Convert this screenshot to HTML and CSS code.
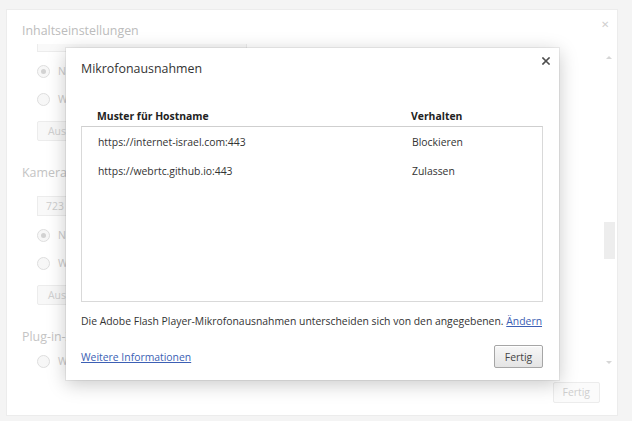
FILE: index.html
```html
<!DOCTYPE html>
<html lang="de">
<head>
<meta charset="utf-8">
<title>Mikrofonausnahmen</title>
<link rel="stylesheet" href="styles.css">
</head>
<body>
<div class="settings">
  <div class="settings-head">
    <span class="settings-title">Inhaltseinstellungen</span>
    <span class="settings-close">&#x2715;</span>
  </div>
  <div class="settings-body">
    <div class="scroll">
      <div class="sel sel-top"></div>
      <div class="radio-row"><span class="radio checked"></span><span>Nachfragen, wenn eine Website auf das Mikrofon zugreifen möchte</span></div>
      <div class="radio-row"><span class="radio"></span><span>Websites den Zugriff auf das Mikrofon nicht gestatten</span></div>
      <div class="bgbtn">Ausnahmen verwalten...</div>
      <div class="sect">Kamera</div>
      <div class="sel">723 HD Webcam</div>
      <div class="radio-row"><span class="radio checked"></span><span>Nachfragen, wenn eine Website auf die Kamera zugreifen möchte</span></div>
      <div class="radio-row"><span class="radio"></span><span>Websites den Zugriff auf die Kamera nicht gestatten</span></div>
      <div class="bgbtn">Ausnahmen verwalten...</div>
      <div class="sect sect-plug">Plug-in-Zugriff ohne Sandbox</div>
      <div class="radio-row"><span class="radio"></span><span>Websites den Zugriff erlauben</span></div>
    </div>
    <div class="scrollbar">
      <span class="arrow up"></span>
      <span class="thumb"></span>
      <span class="arrow down"></span>
    </div>
  </div>
  <div class="settings-foot">
    <span class="bgbtn bgbtn-done">Fertig</span>
  </div>
</div>

<div class="modal">
  <div class="modal-head">
    <span class="modal-title">Mikrofonausnahmen</span>
    <svg class="modal-close" width="8" height="8" viewBox="0 0 8 8"><path d="M1 1L7 7M7 1L1 7" stroke="#4d4d4d" stroke-width="1.6" stroke-linecap="square"/></svg>
  </div>
  <div class="cols">
    <span class="col-host">Muster für Hostname</span>
    <span class="col-beh">Verhalten</span>
  </div>
  <div class="list">
    <div class="row"><span class="col-host">https://internet-israel.com:443</span><span class="col-beh">Blockieren</span></div>
    <div class="row"><span class="col-host">https://webrtc.github.io:443</span><span class="col-beh">Zulassen</span></div>
  </div>
  <p class="note">Die Adobe Flash Player-Mikrofonausnahmen unterscheiden sich von den angegebenen. <a href="#" class="link">Ändern</a></p>
  <div class="modal-foot">
    <a href="#" class="link">Weitere Informationen</a>
    <button class="btn">Fertig</button>
  </div>
</div>
</body>
</html>
```

FILE: styles.css
```css
html, body {
  margin: 0;
  padding: 0;
}
body {
  width: 632px;
  height: 421px;
  background: #f4f4f4;
  position: relative;
  overflow: hidden;
  font-family: "Open Sans", "Noto Sans", sans-serif;
  font-size: 10.4px;
  color: #333;
}
.settings {
  position: relative;
  top: 10px;
  left: 7px;
  width: 610px;
  height: 405px;
  background: #fff;
  box-shadow: 0 0 0 1px #ececec;
  display: flex;
  flex-direction: column;
  color: #c4c4c4;
}
.settings-head {
  height: 34px;
  display: flex;
  justify-content: space-between;
  align-items: flex-start;
  padding: 0 8px 0 15px;
}
.settings-title {
  margin-top: 11px;
  font-size: 12.4px;
  line-height: 20px;
  color: #bcbcbc;
}
.settings-close {
  margin-top: 7px;
  font-size: 10px;
  color: #cfcfcf;
}
.settings-body {
  display: flex;
  height: 326px;
}
.scroll {
  flex: 1;
  overflow: hidden;
  padding-left: 15px;
}
.sel {
  margin-left: 15px;
  width: 200px;
  height: 18px;
  border: 1px solid #ececec;
  background: #f9f9f9;
  padding-left: 8px;
  line-height: 18px;
  color: #cdcdcd;
  margin-top: 13px;
}
.sel-top {
  margin-top: -12px;
}
.radio-row {
  margin-left: 15px;
  height: 28px;
  display: flex;
  align-items: center;
  gap: 8px;
  color: #cbcbcb;
}
.sel-top + .radio-row {
  margin-top: 11px;
}
.sel + .radio-row {
  margin-top: 5px;
}
.radio {
  width: 11px;
  height: 11px;
  border: 1px solid #dedede;
  border-radius: 50%;
  background: #f7f7f7;
  display: flex;
  align-items: center;
  justify-content: center;
}
.radio.checked::after {
  content: "";
  width: 5px;
  height: 5px;
  border-radius: 50%;
  background: #d2d2d2;
}
.bgbtn {
  display: inline-block;
  margin: 8px 0 0 15px;
  height: 18px;
  line-height: 18px;
  padding: 0 10px;
  border: 1px solid #ececec;
  border-radius: 2px;
  background: #f8f8f8;
  color: #d0d0d0;
}
.sect {
  margin-top: 22px;
  font-size: 12.4px;
  line-height: 20px;
  color: #c4c4c4;
}
.sect-plug {
  margin-top: 22px;
}
.scrollbar {
  width: 12px;
  margin: 6px 2px 0 6px;
  height: 320px;
  display: flex;
  flex-direction: column;
  align-items: center;
  position: relative;
}
.arrow {
  width: 0;
  height: 0;
  border-left: 3px solid transparent;
  border-right: 3px solid transparent;
}
.arrow.up {
  border-bottom: 3px solid #d6d6d6;
  margin-top: 6px;
}
.arrow.down {
  border-top: 3px solid #d6d6d6;
  margin-top: auto;
  margin-bottom: 6px;
}
.thumb {
  width: 11px;
  height: 37px;
  background: #ededed;
  margin-top: 163px;
}
.settings-foot {
  display: flex;
  justify-content: flex-end;
  padding: 12px 17px 0 0;
}
.bgbtn-done {
  margin: 0;
  height: 19px;
  line-height: 19px;
  padding: 0 9px;
  color: #cfcfcf;
  background: #fbfbfb;
}

/* modal */
.modal {
  position: absolute;
  left: 66px;
  top: 48px;
  width: 493px;
  height: 332px;
  box-sizing: border-box;
  background: #fff;
  box-shadow: 0 4px 18px rgba(0, 0, 0, 0.22), 0 0 0 1px rgba(0, 0, 0, 0.06);
  padding: 0 16px 0 15px;
  display: flex;
  flex-direction: column;
}
.modal-head {
  display: flex;
  justify-content: space-between;
  align-items: flex-start;
  height: 58px;
}
.modal-title {
  margin-top: 11px;
  font-size: 12.4px;
  line-height: 20px;
  color: #333;
}
.modal-close {
  margin-top: 9px;
  margin-right: -7px;
}
.cols {
  display: flex;
  height: 20px;
  line-height: 20px;
  font-weight: bold;
  color: #222;
}
.col-host {
  width: 314px;
  padding-left: 16px;
}
.col-beh {
  flex: 1;
}
.list {
  height: 176px;
  box-sizing: border-box;
  border: 1px solid #d9d9d9;
  border-top-color: #cfcfcf;
  padding-top: 1px;
}
.row {
  display: flex;
  height: 29px;
  line-height: 29px;
  color: #333;
}
.note {
  margin: 10px 0 0;
  line-height: 18px;
  color: #333;
  white-space: nowrap;
}
.link {
  color: #3c5fb4;
  text-decoration: underline;
}
.modal-foot {
  display: flex;
  justify-content: space-between;
  align-items: center;
  margin-top: 15px;
}
.btn {
  font-family: inherit;
  font-size: 10.4px;
  color: #444;
  width: 49px;
  height: 23px;
  padding: 0;
  border: 1px solid #a6a6a6;
  border-radius: 2px;
  background: linear-gradient(#f7f7f7, #e4e4e4);
  box-shadow: inset 0 1px 0 #fff;
}
```
